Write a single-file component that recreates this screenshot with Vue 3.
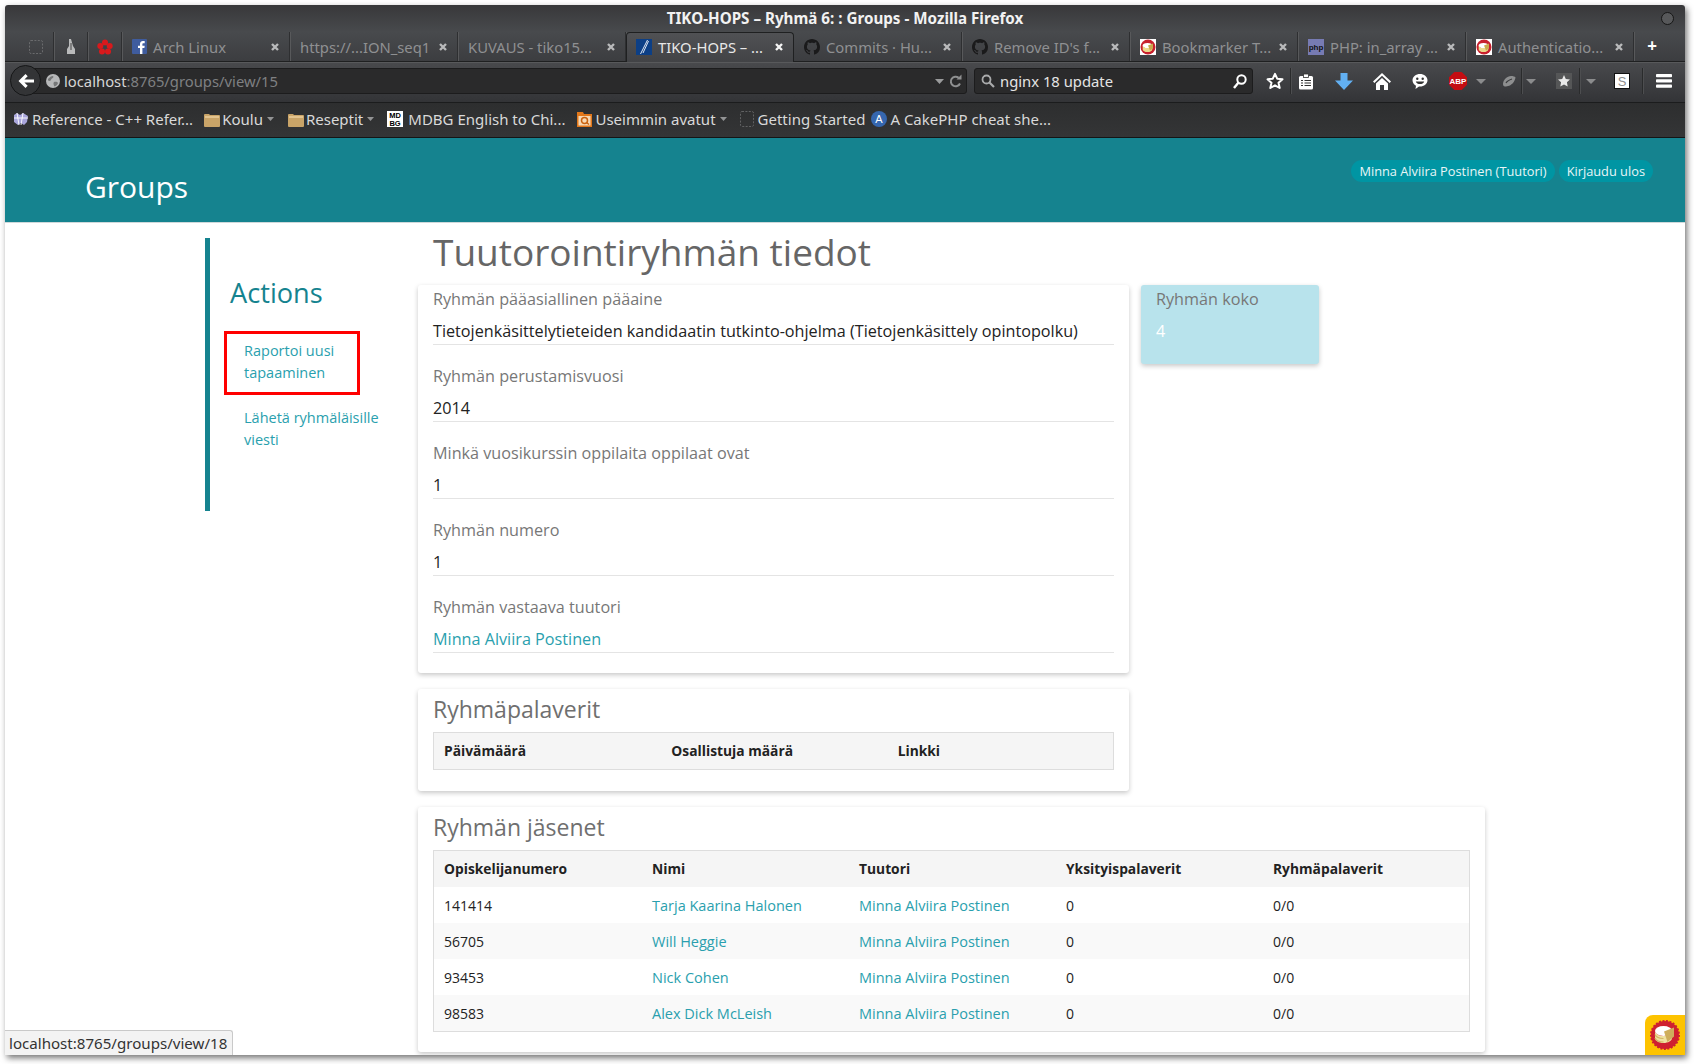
<template>
  <div class="shot">
    <div class="window">
      <div class="chrome">
        <div class="titlebar">
          <span class="title">TIKO-HOPS – Ryhmä 6: : Groups - Mozilla Firefox</span>
          <span class="wm-dot"></span>
        </div>

        <div class="tabstrip">
          <div class="pinned first">
            <svg width="14" height="14" viewBox="0 0 14 14"><rect x=".5" y=".5" width="13" height="13" rx="1.5" fill="none" stroke="#6a6b6d" stroke-dasharray="2 1.4"/></svg>
          </div>
          <div class="pinned">
            <svg width="10" height="18" viewBox="0 0 10 18"><path d="M3 1 L5 1 L7 8 L9 11 L9 16 L1 16 L1 11 L3 8 Z" fill="#b9babb"/><path d="M5 5v7" stroke="#444" stroke-width="1"/></svg>
          </div>
          <div class="pinned">
            <svg width="16" height="16" viewBox="0 0 16 16" fill="#d9191c"><circle cx="8" cy="3.4" r="3"/><circle cx="3.3" cy="7" r="3"/><circle cx="12.7" cy="7" r="3"/><circle cx="5" cy="12.4" r="3"/><circle cx="11" cy="12.4" r="3"/><circle cx="8" cy="8" r="1.4" fill="#3f4043"/></svg>
          </div>

          <div v-for="tab in tabs" :key="tab.text" class="tab" :class="{ active: tab.active }">
            <svg v-if="tab.icon === 'fb'" class="fav" width="15" height="15" viewBox="0 0 15 15"><rect width="15" height="15" rx="1" fill="#3f5c9e"/><path d="M10.4 15V9h2l.3-2.3h-2.3V5.3c0-.7.2-1.1 1.1-1.1h1.2V2.1c-.3 0-1-.1-1.800-.1-1.700 0-2.900 1-2.900 3v1.700h-2V9h2v6z" fill="#fff"/></svg>
            <svg v-else-if="tab.icon === 'gh'" class="fav" width="16" height="16" viewBox="0 0 16 16"><path fill="#1a1a1b" d="M8 0C3.58 0 0 3.58 0 8c0 3.54 2.29 6.53 5.47 7.59.4.07.55-.17.55-.38 0-.19-.01-.82-.01-1.49-2.01.37-2.530-.49-2.690-.94-.09-.23-.48-.94-.82-1.13-.28-.15-.68-.52-.01-.53.63-.01 1.08.58 1.23.82.72 1.21 1.87.87 2.33.66.07-.52.28-.87.51-1.07-1.78-.2-3.64-.89-3.64-3.95 0-.87.31-1.59.82-2.15-.08-.2-.36-1.02.08-2.12 0 0 .67-.21 2.2.82.64-.18 1.32-.27 2-.27.68 0 1.36.09 2 .27 1.53-1.04 2.2-.82 2.2-.82.44 1.1.16 1.92.08 2.12.51.56.82 1.27.82 2.15 0 3.07-1.87 3.75-3.65 3.95.29.25.54.73.54 1.48 0 1.07-.01 1.93-.01 2.2 0 .21.15.46.55.38A8.013 8.013 0 0016 8c0-4.420-3.580-8-8-8z"/></svg>
            <svg v-else-if="tab.icon === 'cake'" class="fav" width="16" height="16" viewBox="0 0 16 16"><rect width="16" height="16" fill="#fff"/><circle cx="8" cy="8" r="7.500" fill="#c8202d"/><ellipse cx="7.500" cy="6.500" rx="4.800" ry="2.600" fill="#fff"/><path d="M2.700 6.500v4c0 1.500 2.200 2.600 4.800 2.600s4.800-1.100 4.800-2.600v-4c0 1.500-2.200 2.600-4.800 2.600s-4.800-1.100-4.800-2.600z" fill="#ecd88a"/><path d="M8 6.500 13 4.500v5l-3 2z" fill="#c9a94e"/></svg>
            <svg v-else-if="tab.icon === 'php'" class="fav" width="16" height="16" viewBox="0 0 16 16"><rect width="16" height="16" fill="#777bb3"/><text x="8" y="11" text-anchor="middle" font-family="Liberation Sans, sans-serif" font-size="8" font-weight="700" fill="#111">php</text></svg>
            <svg v-else-if="tab.icon === 'tiko'" class="fav" width="16" height="16" viewBox="0 0 16 16"><rect width="16" height="16" fill="#0c3f86"/><path d="M11.500 1 4.500 15M12.500 2 7 14" stroke="#dfe7f2" stroke-width="1" fill="none"/></svg>
            <span class="tab-text">{{ tab.text }}</span>
            <svg class="tab-close" width="10" height="10" viewBox="0 0 10 10"><path d="M2 2l6 6M8 2l-6 6" stroke="currentColor" stroke-width="2.400"/></svg>
          </div>

          <div class="newtab">+</div>
        </div>

        <div class="navbar">
          <div class="back">
            <svg width="18" height="16" viewBox="0 0 18 16"><path d="M8.500 1 1.500 8l7 7 2.200-2.200-3.300-3.200H17V6.400H7.400l3.300-3.200z" fill="#fff"/></svg>
          </div>
          <div class="urlbar">
            <svg class="globe" width="14" height="14" viewBox="0 0 14 14"><circle cx="7" cy="7" r="7" fill="#b7b8b9"/><path d="M2 5c2-2 3-3 5-3 1 1 0 2-1 2.500S5 7 3.500 7 2 6 2 5zM8 8c2-.5 3.500 0 4 1-.5 2-2 3-3.500 3.500C7.500 11 7 9 8 8z" fill="#767778"/></svg>
            <span class="host">localhost</span><span class="path">:8765/groups/view/15</span>
            <svg class="url-drop" width="9" height="5" viewBox="0 0 9 5"><path d="M0 0h9L4.500 5z" fill="#9a9b9c"/></svg>
            <svg class="url-reload" width="13" height="14" viewBox="0 0 13 14"><path d="M11 9.500A4.800 4.800 0 1 1 9.700 3.800" fill="none" stroke="#8f9091" stroke-width="2"/><path d="M7.500 5.500h5V.5z" fill="#8f9091"/></svg>
          </div>
          <div class="searchbar">
            <svg class="s-left" width="14" height="14" viewBox="0 0 14 14"><circle cx="5.500" cy="5.500" r="4" fill="none" stroke="#a9aaab" stroke-width="1.800"/><path d="M8.500 8.500 13 13" stroke="#a9aaab" stroke-width="2.200"/></svg>
            <span class="s-text">nginx 18 update</span>
            <svg class="s-go" width="14" height="15" viewBox="0 0 14 15"><circle cx="8.500" cy="5.500" r="4.200" fill="none" stroke="#fff" stroke-width="2"/><path d="M5.500 8.500 1 14" stroke="#fff" stroke-width="2.400"/></svg>
          </div>

          <svg class="ti i-star" width="18" height="18" viewBox="0 0 18 18"><path d="M9 1.800 11.200 6.700 16.500 7.300 12.500 10.800 13.700 16 9 13.300 4.300 16 5.500 10.800 1.500 7.300 6.800 6.700z" fill="#333" stroke="#fff" stroke-width="2" stroke-linejoin="round"/></svg>
          <i class="sep s-a"></i>
          <svg class="ti i-clip" width="16" height="17" viewBox="0 0 16 17"><rect x="1" y="3" width="14" height="13.500" rx="1.500" fill="#fff"/><rect x="5.500" y="1" width="5" height="3.500" fill="#fff" stroke="#333" stroke-width=".8"/><path d="M3 7.500h2M6.500 7.500H13M3 10h2M6.500 10H13M3 12.500h2M6.500 12.500H13" stroke="#333" stroke-width="1.200"/></svg>
          <svg class="ti i-down" width="18" height="17" viewBox="0 0 18 17"><path d="M5.500 0h7v7.500H18L9 17 0 7.500h5.500z" fill="#62b0f2"/></svg>
          <svg class="ti i-home" width="18" height="17" viewBox="0 0 18 17"><path d="M9 0 0 8.500l1.400 1.400L9 2.800l7.600 7.100L18 8.500z" fill="#fff"/><path d="M3 10.500 9 5l6 5.500V17h-4v-5H7v5H3z" fill="#fff"/></svg>
          <svg class="ti i-chat" width="16" height="17" viewBox="0 0 16 17"><path d="M8 1c4 0 7.500 2.600 7.500 6.200S12 13.500 8 13.500H7L3.500 16l.5-3.200C2 11.700.5 9.700.5 7.200.5 3.600 4 1 8 1z" fill="#fff"/><circle cx="5.300" cy="5.800" r="1.200" fill="#333"/><circle cx="10.700" cy="5.800" r="1.200" fill="#333"/><path d="M3.800 8.500h8.400c-.6 1.800-2.300 2.600-4.200 2.600s-3.600-.8-4.200-2.600z" fill="#333"/></svg>
          <svg class="ti i-abp" width="18" height="18" viewBox="0 0 18 18"><path d="M5.300 0h7.400L18 5.300v7.400L12.700 18H5.300L0 12.700V5.300z" fill="#c40d12"/><text x="9" y="12" text-anchor="middle" font-family="Liberation Sans, sans-serif" font-size="8" font-weight="700" fill="#fff">ABP</text></svg>
          <svg class="ti i-arr1 arr" width="10" height="5" viewBox="0 0 10 5"><path d="M0 0h10L5 5z" fill="#8b8c8d"/></svg>
          <svg class="ti i-pea" width="14" height="13" viewBox="0 0 14 13"><path d="M1 9c0-4 4-8 8-8 2 0 4 .500 4.500 1.500C13 6 10 11 4 11.500 2 11.500 1 11 1 9z" fill="#8d8e8f"/><path d="M4 8c1-2 3-3 6-4" stroke="#3a3b3d" stroke-width="1.200" fill="none"/></svg>
          <i class="sep s-b"></i>
          <svg class="ti i-arr2 arr" width="10" height="5" viewBox="0 0 10 5"><path d="M0 0h10L5 5z" fill="#8b8c8d"/></svg>
          <svg class="ti i-burst" width="16" height="16" viewBox="0 0 16 16"><rect width="16" height="16" fill="#555657"/><path d="M8 2 9.800 6 14 6.500 10.900 9.300 11.700 13.500 8 11.400 4.300 13.500 5.100 9.300 2 6.500 6.200 6z" fill="#e9e9e9"/></svg>
          <i class="sep s-c"></i>
          <svg class="ti i-arr3 arr" width="10" height="5" viewBox="0 0 10 5"><path d="M0 0h10L5 5z" fill="#8b8c8d"/></svg>
          <svg class="ti i-s" width="16" height="16" viewBox="0 0 16 16"><rect x=".5" y=".5" width="15" height="15" fill="#fff" stroke="#111"/><text x="8" y="13" text-anchor="middle" font-family="Liberation Sans, sans-serif" font-size="13" fill="#8e8e8e">S</text></svg>
          <i class="sep s-d"></i>
          <svg class="ti i-ham" width="16" height="14" viewBox="0 0 16 14" fill="#fff"><rect width="16" height="3.200" rx=".8"/><rect y="5.300" width="16" height="3.200" rx=".8"/><rect y="10.600" width="16" height="3.200" rx=".8"/></svg>
        </div>

        <div class="bookmarks">
          <div class="bm b-ref">
            <svg width="16" height="14" viewBox="0 0 16 14"><path d="M1 3l3-2 3 2 3-2 5 3-1 6-3 3-3-2-3 2-4-3z" fill="#a9a6dc"/><path d="M4 1l2 12M10 1 8 13M1 6h14" stroke="#fff" stroke-width=".9"/></svg>
            <span>Reference - C++ Refer...</span>
          </div>
          <div class="bm b-koulu">
            <svg class="folder" width="16" height="15" viewBox="0 0 16 15"><path d="M0 3a1 1 0 0 1 1-1h4l1 1h9a1 1 0 0 1 1 1v10a1 1 0 0 1-1 1H1a1 1 0 0 1-1-1z" fill="#c9a468"/><rect x="1" y="4" width="14" height="2" fill="#e3c48f"/></svg>
            <span>Koulu</span>
            <svg class="bm-arr" width="7" height="4" viewBox="0 0 7 4"><path d="M0 0h7L3.500 4z" fill="#939495"/></svg>
          </div>
          <div class="bm b-resept">
            <svg class="folder" width="16" height="15" viewBox="0 0 16 15"><path d="M0 3a1 1 0 0 1 1-1h4l1 1h9a1 1 0 0 1 1 1v10a1 1 0 0 1-1 1H1a1 1 0 0 1-1-1z" fill="#c9a468"/><rect x="1" y="4" width="14" height="2" fill="#e3c48f"/></svg>
            <span>Reseptit</span>
            <svg class="bm-arr" width="7" height="4" viewBox="0 0 7 4"><path d="M0 0h7L3.500 4z" fill="#939495"/></svg>
          </div>
          <div class="bm b-mdbg">
            <svg width="16" height="16" viewBox="0 0 16 16"><rect width="16" height="16" fill="#fff"/><text x="8" y="7" text-anchor="middle" font-family="Liberation Sans, sans-serif" font-size="7.500" font-weight="700" fill="#000">MD</text><text x="8" y="14.500" text-anchor="middle" font-family="Liberation Sans, sans-serif" font-size="7.500" font-weight="700" fill="#000">BG</text></svg>
            <span>MDBG English to Chi...</span>
          </div>
          <div class="bm b-use">
            <svg width="15" height="16" viewBox="0 0 15 16"><path d="M0 1h6l1 2h8v13H0z" fill="#e2771a"/><rect x="1.500" y="5" width="12" height="9.500" fill="#f7d9b5"/><circle cx="7.500" cy="9.500" r="3" fill="none" stroke="#c9620f" stroke-width="1.500"/><path d="M9.500 11.500l2.500 2" stroke="#c9620f" stroke-width="1.500"/></svg>
            <span>Useimmin avatut</span>
            <svg class="bm-arr" width="7" height="4" viewBox="0 0 7 4"><path d="M0 0h7L3.500 4z" fill="#939495"/></svg>
          </div>
          <div class="bm b-get">
            <svg width="14" height="16" viewBox="0 0 14 16"><rect x=".5" y=".5" width="13" height="15" rx="1.500" fill="none" stroke="#616263" stroke-dasharray="2 1.400"/></svg>
            <span>Getting Started</span>
          </div>
          <div class="bm b-cake">
            <svg width="16" height="16" viewBox="0 0 16 16"><circle cx="8" cy="8" r="8" fill="#3566ae"/><text x="8" y="12" text-anchor="middle" font-family="Liberation Sans, sans-serif" font-size="11" fill="#fff">A</text></svg>
            <span>A CakePHP cheat she...</span>
          </div>
        </div>
      </div>

      <header class="site-head">
        <h2 class="site-title">Groups</h2>
        <div class="pills">
          <a class="pill">Minna Alviira Postinen (Tuutori)</a>
          <a class="pill">Kirjaudu ulos</a>
        </div>
      </header>

      <div class="page">
        <aside class="side">
          <h3 class="side-title">Actions</h3>
          <a class="side-link boxed">Raportoi uusi tapaaminen</a>
          <a class="side-link">Lähetä ryhmäläisille viesti</a>
        </aside>

        <main class="content">
          <h1 class="page-title">Tuutorointiryhmän tiedot</h1>

          <div class="top-row">
            <section class="card info">
              <div v-for="f in fields" :key="f.label" class="field">
                <div class="f-label">{{ f.label }}</div>
                <div class="f-value" :class="{ link: f.link }">{{ f.value }}</div>
              </div>
            </section>
            <section class="size-card">
              <div class="f-label">Ryhmän koko</div>
              <div class="size-value">4</div>
            </section>
          </div>

          <section class="card meetings">
            <h3 class="card-title">Ryhmäpalaverit</h3>
            <table class="tbl">
              <thead>
                <tr><th>Päivämäärä</th><th>Osallistuja määrä</th><th>Linkki</th></tr>
              </thead>
            </table>
          </section>

          <section class="card members">
            <h3 class="card-title">Ryhmän jäsenet</h3>
            <table class="tbl">
              <thead>
                <tr><th>Opiskelijanumero</th><th>Nimi</th><th>Tuutori</th><th>Yksityispalaverit</th><th>Ryhmäpalaverit</th></tr>
              </thead>
              <tbody>
                <tr v-for="m in members" :key="m.id">
                  <td>{{ m.id }}</td>
                  <td><a>{{ m.name }}</a></td>
                  <td><a>Minna Alviira Postinen</a></td>
                  <td>0</td>
                  <td>0/0</td>
                </tr>
              </tbody>
            </table>
          </section>
        </main>
      </div>

      <div class="status">localhost:8765/groups/view/18</div>
      <div class="cake-tab">
        <svg width="30" height="30" viewBox="0 0 30 30">
          <circle cx="15" cy="15" r="14" fill="#cf2030" stroke="#cf2030" stroke-dasharray="2 1.500" stroke-width="2"/>
          <ellipse cx="13.500" cy="11" rx="8.500" ry="5" fill="#fff"/>
          <path d="M5 11v7c0 2.800 3.800 5 8.500 5s8.500-2.200 8.500-5v-7c0 2.800-3.800 5-8.500 5S5 13.800 5 11z" fill="#f0e2a2"/>
          <path d="M5 14.500c1 2.500 4.500 4 8.500 4M5 18c1 2.500 4.500 4 8.500 4" stroke="#d2b660" stroke-width="1.200" fill="none"/>
          <path d="M14 11.500 24 7.500v9l-6.500 5.500z" fill="#cfae5c"/>
        </svg>
      </div>
    </div>
  </div>
</template>

<script setup>
const tabs = [
  { icon: 'fb', text: 'Arch Linux' },
  { text: 'https://...ION_seq1' },
  { text: 'KUVAUS - tiko15...' },
  { icon: 'tiko', text: 'TIKO-HOPS – ...', active: true },
  { icon: 'gh', text: 'Commits · Hu...' },
  { icon: 'gh', text: "Remove ID's f..." },
  { icon: 'cake', text: 'Bookmarker T...' },
  { icon: 'php', text: 'PHP: in_array ...' },
  { icon: 'cake', text: 'Authenticatio...' }
]

const fields = [
  { label: 'Ryhmän pääasiallinen pääaine', value: 'Tietojenkäsittelytieteiden kandidaatin tutkinto-ohjelma (Tietojenkäsittely opintopolku)' },
  { label: 'Ryhmän perustamisvuosi', value: '2014' },
  { label: 'Minkä vuosikurssin oppilaita oppilaat ovat', value: '1' },
  { label: 'Ryhmän numero', value: '1' },
  { label: 'Ryhmän vastaava tuutori', value: 'Minna Alviira Postinen', link: true }
]

const members = [
  { id: '141414', name: 'Tarja Kaarina Halonen' },
  { id: '56705', name: 'Will Heggie' },
  { id: '93453', name: 'Nick Cohen' },
  { id: '98583', name: 'Alex Dick McLeish' }
]
</script>

<style>
html, body {
  margin: 0;
  background: #fff;
  overflow: hidden;
}
</style>

<style scoped>
.shot {
  box-sizing: border-box;
  width: 1694px;
  height: 1064px;
  padding: 5px 9px 9px 5px;
  font-family: "Open Sans", "Noto Sans", sans-serif;
}

.window {
  position: relative;
  width: 1680px;
  height: 1050px;
  overflow: hidden;
  background: #fff;
  border-radius: 3px 3px 0 0;
  box-shadow: 2px 3px 6px rgba(0, 0, 0, 0.55);
}

/* browser chrome */
.chrome {
  font-family: "Noto Sans", "Open Sans", sans-serif;
  font-size: 14.800px;
}

.titlebar {
  position: relative;
  height: 27px;
  display: flex;
  align-items: center;
  justify-content: center;
  background: linear-gradient(#38383a, #484a4d);
}

.title {
  color: #f2f2f2;
  font-size: 15.200px;
  font-weight: 700;
  margin-top: -1px;
}

.wm-dot {
  position: absolute;
  right: 11px;
  top: 7px;
  width: 11px;
  height: 11px;
  border-radius: 50%;
  background: #57585a;
  border: 1px solid #161616;
}

.tabstrip {
  height: 29px;
  display: flex;
  background: linear-gradient(#484a4d, #3c3d40);
  border-bottom: 1px solid #1f2021;
  box-sizing: content-box;
}

.pinned {
  width: 34px;
  flex: none;
  display: flex;
  align-items: center;
  justify-content: center;
  box-sizing: border-box;
  border-right: 1px solid #2e2f31;
  box-shadow: 1px 0 0 #58595b;
}

.pinned.first {
  width: 49px;
  padding-left: 14px;
}

.tab {
  width: 168px;
  flex: none;
  box-sizing: border-box;
  display: flex;
  align-items: center;
  padding: 0 10px;
  color: #8f9092;
  border-right: 1px solid #2e2f31;
  box-shadow: 1px 0 0 #58595b;
  white-space: nowrap;
}

.tab.active {
  color: #e8e8e8;
  height: 30px;
  padding-bottom: 2px;
  background: linear-gradient(#505154, #424346);
  border: 1px solid #1f2021;
  border-bottom: none;
  border-radius: 4px 4px 0 0;
  box-shadow: none;
  padding-left: 9px;
}

.fav {
  flex: none;
  margin-right: 6px;
}

.tab-close {
  margin-left: auto;
  margin-right: -1px;
  color: #b9babb;
}

.tab.active .tab-close {
  color: #f4f4f4;
}

.newtab {
  width: 36px;
  text-align: center;
  color: #fff;
  font-weight: 700;
  font-size: 17px;
  line-height: 28px;
}

.navbar {
  height: 41px;
  display: flex;
  align-items: center;
  padding-bottom: 3px;
  background: linear-gradient(#48494c, #333437);
  border-top: 1px solid #58595b;
  box-sizing: border-box;
  border-bottom: 1px solid #1b1c1d;
  position: relative;
}

.back {
  position: absolute;
  left: 5px;
  top: 2px;
  width: 31px;
  height: 31px;
  box-sizing: border-box;
  border-radius: 50%;
  background: #333436;
  border: 1px solid #161718;
  display: flex;
  align-items: center;
  justify-content: center;
  z-index: 1;
}

.urlbar {
  margin-left: 25px;
  width: 937px;
  height: 26px;
  box-sizing: border-box;
  background: #2a2a2b;
  border: 1px solid #1c1c1d;
  border-radius: 3px;
  display: flex;
  align-items: center;
  padding-left: 15px;
  white-space: nowrap;
}

.globe {
  margin-right: 4px;
}

.host {
  color: #d6d6d6;
}

.path {
  color: #7f8082;
}

.url-drop {
  margin-left: auto;
}

.url-reload {
  margin: 0 4px 0 5px;
}

.searchbar {
  margin-left: 7px;
  width: 279px;
  height: 26px;
  box-sizing: border-box;
  background: #2a2a2b;
  border: 1px solid #1c1c1d;
  border-radius: 3px;
  display: flex;
  align-items: center;
  padding: 0 5px 0 6px;
  color: #e4e4e4;
}

.s-text {
  margin-left: 5px;
}

.s-go {
  margin-left: auto;
}

.ti {
  flex: none;
}

.sep {
  width: 1px;
  height: 26px;
  background: #2a2b2c;
  box-shadow: 1px 0 0 #4d4e50;
  flex: none;
}

.i-star { margin-left: 13px; }
.s-a { margin-left: 6px; }
.i-clip { margin-left: 7px; }
.i-down { margin-left: 21px; }
.i-home { margin-left: 20px; }
.i-chat { margin-left: 21px; }
.i-abp { margin-left: 21px; }
.i-arr1 { margin-left: 9px; }
.i-pea { margin-left: 16px; }
.s-b { margin-left: 5px; }
.i-arr2 { margin-left: 4px; }
.i-burst { margin-left: 20px; }
.s-c { margin-left: 7px; }
.i-arr3 { margin-left: 6px; }
.i-s { margin-left: 18px; }
.s-d { margin-left: 12px; }
.i-ham { margin-left: 13px; }

.bookmarks {
  height: 35px;
  box-sizing: border-box;
  display: flex;
  align-items: center;
  padding-bottom: 2px;
  background: linear-gradient(#2d2e2f, #343536);
  border-bottom: 1px solid #141516;
  color: #d9d9d9;
  font-size: 15px;
  white-space: nowrap;
}

.bm {
  display: flex;
  align-items: center;
  flex: none;
}

.bm > span {
  margin-left: 2px;
}

.bm-arr {
  margin-left: 4px;
}

.b-ref { margin-left: 8px; }
.b-ref > span { margin-left: 3px; }
.b-koulu { margin-left: 11px; }
.b-resept { margin-left: 14px; }
.b-mdbg { margin-left: 13px; }
.b-mdbg > span { margin-left: 5px; }
.b-use { margin-left: 12px; }
.b-use > span { margin-left: 3px; }
.b-get { margin-left: 13px; }
.b-get > span { margin-left: 4px; }
.b-cake { margin-left: 6px; }
.b-cake > span { margin-left: 3px; }

/* site header */
.site-head {
  height: 85px;
  box-sizing: border-box;
  background: #15838f;
  border-bottom: 1px solid #cfd8da;
  display: flex;
  justify-content: space-between;
  align-items: flex-start;
  padding: 22px 32px 0 80px;
}

.site-title {
  margin: 10px 0 0;
  color: #fff;
  font-size: 30px;
  font-weight: 400;
  line-height: 34px;
}

.pills {
  display: flex;
  gap: 4px;
}

.pill {
  height: 22px;
  line-height: 22px;
  padding: 0 8px;
  border-radius: 11px;
  background: #0095a3;
  color: #e8f6f7;
  font-size: 12.800px;
  white-space: nowrap;
}

/* page */
.page {
  display: flex;
  padding-left: 200px;
}

.side {
  box-sizing: border-box;
  width: 213px;
  flex: none;
  margin-top: 15px;
}

.side::before {
  content: "";
  float: left;
  width: 5px;
  height: 273px;
  background: #15838f;
}

.side-title {
  margin: 38px 0 0 25px;
  color: #15838f;
  font-size: 27.200px;
  font-weight: 400;
  line-height: 34px;
}

.side-link {
  display: block;
  box-sizing: border-box;
  width: 136px;
  margin: 0 0 0 19px;
  padding: 8px 20px;
  color: #2a9fae;
  font-size: 14.500px;
  line-height: 22px;
}

.side-link.boxed {
  margin-top: 21px;
  height: 64px;
  border: 3px solid #f00;
  padding: 6px 17px;
}

.side-link:not(.boxed) {
  width: 176px;
  margin-top: 0;
  padding-top: 12px;
}

.content {
  width: 1067px;
  flex: none;
}

.page-title {
  margin: 0;
  padding-left: 15px;
  height: 62px;
  color: #666;
  font-size: 37px;
  font-weight: 400;
  line-height: 58px;
  white-space: nowrap;
}

.top-row {
  display: flex;
  align-items: flex-start;
  gap: 12px;
}

.card {
  box-sizing: border-box;
  background: #fff;
  border-radius: 3px;
  box-shadow: 0 2px 5px rgba(0, 0, 0, 0.22);
}

.info {
  width: 711px;
  padding: 2px 15px 1px;
}

.field {
  margin-bottom: 19px;
}

.f-label {
  color: #777;
  font-size: 16.200px;
  line-height: 24px;
  margin-bottom: 8px;
}

.f-value {
  color: #222;
  font-size: 16.200px;
  line-height: 24px;
  padding-bottom: 1px;
  border-bottom: 1px solid #e4e4e4;
}

.f-value.link {
  color: #2a9fae;
}

.size-card {
  box-sizing: border-box;
  width: 178px;
  height: 79px;
  padding: 2px 15px;
  background: #b8e3ec;
  border-radius: 3px;
  box-shadow: 0 2px 5px rgba(0, 0, 0, 0.22);
}

.size-value {
  color: #fff;
  font-size: 16.200px;
  line-height: 24px;
}

.meetings {
  width: 711px;
  margin-top: 16px;
  padding: 3px 15px 21px;
}

.members {
  margin-top: 16px;
  padding: 3px 15px 20px;
}

.card-title {
  margin: 0 0 6px;
  color: #6f6f6f;
  font-size: 23px;
  font-weight: 400;
  line-height: 34px;
}

.tbl {
  width: 100%;
  table-layout: fixed;
  border-collapse: separate;
  border-spacing: 0;
  border: 1px solid #ddd;
  font-size: 14px;
}

.tbl th {
  height: 34px;
  padding: 0 10px 2px;
  background: #f5f5f5;
  color: #222;
  font-size: 13.800px;
  font-weight: 700;
  text-align: left;
}

.tbl td {
  height: 36px;
  padding: 0 10px;
  color: #222;
}

.tbl th + th,
.tbl td + td {
  padding-left: 11px;
}

.tbl tbody tr:nth-child(even) td {
  background: #f9f9f9;
}

.tbl a {
  color: #2a9fae;
  font-size: 14.500px;
}

.status {
  position: absolute;
  left: 0;
  bottom: 0;
  height: 25px;
  line-height: 24px;
  padding: 0 5px 0 4px;
  box-sizing: border-box;
  background: #f3f3f3;
  border: 1px solid #c9c9c9;
  border-left: none;
  border-bottom: none;
  border-top-right-radius: 3px;
  color: #333;
  font-family: "Noto Sans", sans-serif;
  font-size: 15.100px;
}

.cake-tab {
  position: absolute;
  right: 0;
  bottom: 0;
  width: 40px;
  height: 40px;
  background: #fdc300;
  border-top-left-radius: 8px;
  display: flex;
  align-items: center;
  justify-content: center;
}
</style>
